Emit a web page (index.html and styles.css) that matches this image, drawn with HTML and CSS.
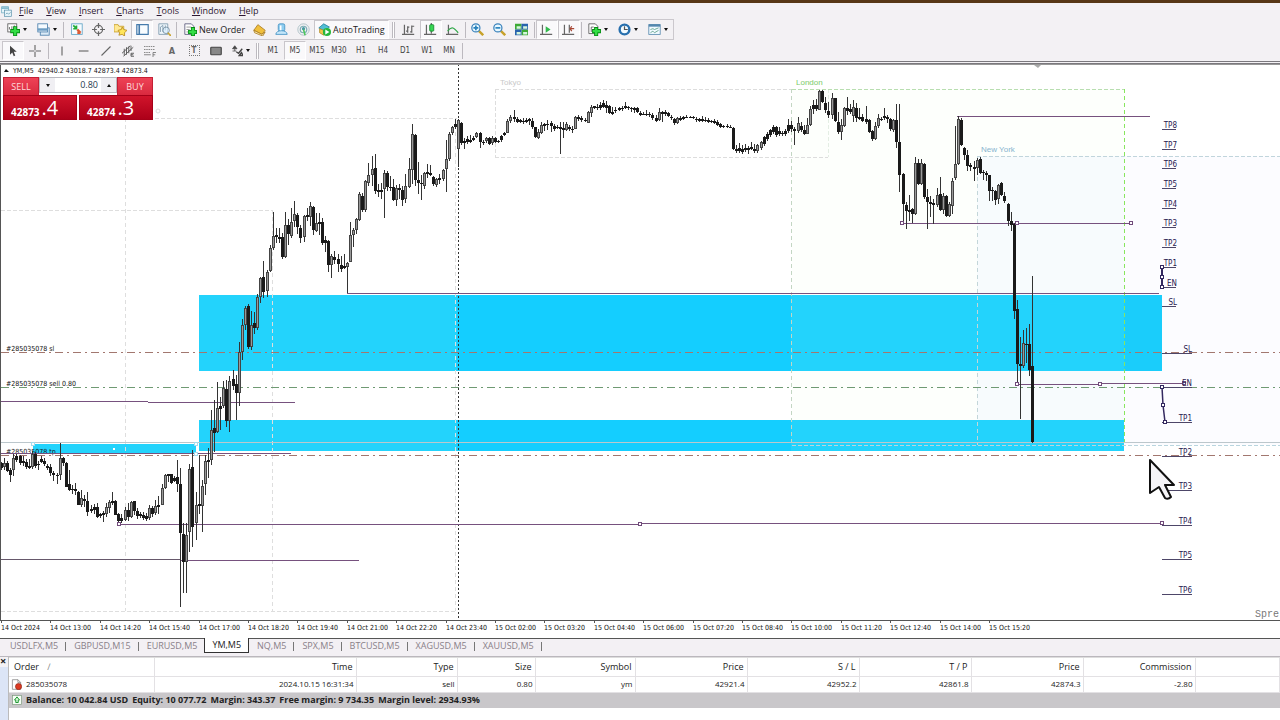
FILE: index.html
```html
<!DOCTYPE html>
<html lang="en">
<head>
<meta charset="utf-8">
<title>YM,M5</title>
<link rel="stylesheet" href="styles.css">
</head>
<body>
<div class="app">
<header class="top">
  <nav class="menu">
    <svg class="icon" viewBox="0 0 16 16"><rect x="1" y="1" width="10" height="9" fill="#e8f5fa" stroke="#67a6bd"/><path d="M1 3h10" stroke="#67a6bd" stroke-width="2"/><rect x="5" y="6" width="10" height="9" fill="#e8f5fa" stroke="#568fa9"/><path d="M7 12l2-2 2 2 3-3" fill="none" stroke="#568fa9"/></svg>
    <button type="button"><u>F</u>ile</button><button type="button"><u>V</u>iew</button><button type="button"><u>I</u>nsert</button><button type="button"><u>C</u>harts</button><button type="button"><u>T</u>ools</button><button type="button"><u>W</u>indow</button><button type="button"><u>H</u>elp</button>
  </nav>
  <div class="bar main-bar">
    <button type="button" class="tool drop" aria-label="New chart"><svg class="icon" viewBox="0 0 16 16"><rect x="1" y="1" width="11" height="10" fill="#fff" stroke="#555"/><path d="M3 8V5M6 9V4M9 7V3" stroke="#555"/><path d="M10 4v12M4 10h12" stroke="#078b15" stroke-width="5"/><path d="M10 5v10M5 10h10" stroke="#33dd45" stroke-width="3"/></svg></button>
    <button type="button" class="tool drop" aria-label="Profiles"><svg class="icon" viewBox="0 0 16 16"><rect x="4" y="6" width="11" height="9" fill="#dcebf7" stroke="#467ba9"/><rect x="1" y="1" width="12" height="10" fill="#f4faff" stroke="#467ba9"/><path d="M1 8h12" stroke="#6c9cc4" stroke-width="3"/></svg></button>
    <i class="sep"></i>
    <button type="button" class="tool" aria-label="Market Watch"><svg class="icon" viewBox="0 0 16 16"><rect x="2" y="1" width="13" height="13" fill="#f5fcff" stroke="#5ca1c5"/><path d="M4 3l4 4M4 7h4V3" stroke="#23ac34" stroke-width="2" fill="none"/><path d="M9 8l4 4M9 12h4" stroke="#dd5b35" stroke-width="3"/></svg></button>
    <button type="button" class="tool" aria-label="Data Window"><svg class="icon" viewBox="0 0 16 16"><circle cx="8" cy="8" r="5" fill="none" stroke="#666" stroke-width="1.5"/><path d="M8 0v6M8 10v6M0 8h6M10 8h6" stroke="#666" stroke-width="1.5"/></svg></button>
    <button type="button" class="tool" aria-label="Navigator"><svg class="icon" viewBox="0 0 16 16"><path d="M0 2h5l1 2h6v7H0z" fill="#ffe993" stroke="#c69c26"/><path d="M10 5l2 3 4 1-3 3 0 4-3-2-4 1 1-3-2-3 4-1z" fill="#ffe65b" stroke="#b6871c"/></svg></button>
    <button type="button" class="tool on" aria-label="Terminal"><svg class="icon" viewBox="0 0 16 16"><rect x="1" y="2" width="14" height="12" fill="#f8fcff" stroke="#447aac" stroke-width="1.5"/><path d="M4 2v12" stroke="#447aac" stroke-width="2"/></svg></button>
    <button type="button" class="tool" aria-label="Strategy Tester"><svg class="icon" viewBox="0 0 16 16"><path d="M1 1h11v13H1zM3 11V5l3-2v8M9 3v6" fill="#eef6fb" stroke="#7895aa"/><circle cx="10" cy="9" r="4" fill="#d7eeff99" stroke="#718a9d"/><path d="M12 12l4 4" stroke="#c8a432" stroke-width="2"/></svg></button>
    <i class="sep"></i>
    <button type="button" class="tool wide order"><svg class="icon" viewBox="0 0 16 16"><path d="M1 1h8l3 3v10H1z" fill="#fff" stroke="#557"/><path d="M3 5h6M3 8h4M3 11h3" stroke="#888"/><path d="M11 5v11M5 11h11" stroke="#078b15" stroke-width="5"/><path d="M11 6v9M6 11h9" stroke="#33dd45" stroke-width="3"/></svg>New Order</button>
    <button type="button" class="tool" aria-label="MetaEditor"><svg class="icon" viewBox="0 0 16 16"><path d="M6 2l9 7-4 5-10-5z" fill="#f0bf3c" stroke="#a7791e"/><path d="M1 9l1 3 10 4 3-5-4 3z" fill="#fff0b4" stroke="#a7791e"/></svg></button>
    <button type="button" class="tool" aria-label="MQL5 Community"><svg class="icon" viewBox="0 0 16 16"><rect x="4" y="1" width="8" height="9" rx="2" fill="#8fcdf0" stroke="#3f8fc0"/><path d="M1 14c0-6 14-6 14 0z" fill="#c3e6fa" stroke="#3f8fc0"/><path d="M7 3v6" stroke="#fff" stroke-width="2"/></svg></button>
    <button type="button" class="tool" aria-label="Signals"><svg class="icon" viewBox="0 0 16 16"><circle cx="8" cy="8" r="7" fill="none" stroke="#a3bac0"/><circle cx="8" cy="8" r="4" fill="none" stroke="#7caeb6" stroke-width="1.5"/><circle cx="8" cy="7" r="2" fill="#4b98a5"/><path d="M8 8l2 7" stroke="#4cc55c" stroke-width="2"/></svg></button>
    <button type="button" class="tool wide on"><svg class="icon" viewBox="0 0 16 16"><path d="M1 6l6-5 7 4-6 5z" fill="#51bed4" stroke="#237f9b"/><path d="M2 7v5l5 3V9z" fill="#efc74d" stroke="#b38d2b"/><circle cx="11" cy="11" r="5" fill="#27b73c"/><path d="M9 8l5 3-5 3z" fill="#fff"/></svg>AutoTrading</button>
    <i class="sep grip"></i>
    <button type="button" class="tool" aria-label="Bar Chart"><svg class="icon" viewBox="0 0 16 16"><path d="M3 2v12M0 14h15M7 4v8M7 10h-2M7 5h2M12 3v9M12 4h3M12 11h-2" fill="none" stroke="#666" stroke-width="1.5"/></svg></button>
    <button type="button" class="tool on" aria-label="Candlesticks"><svg class="icon" viewBox="0 0 16 16"><path d="M3 2v12M0 14h15M9 0v13" stroke="#666" stroke-width="1.5"/><rect x="7" y="2" width="5" height="8" rx="1" fill="#38d654" stroke="#12852b"/></svg></button>
    <button type="button" class="tool" aria-label="Line Chart"><svg class="icon" viewBox="0 0 16 16"><path d="M3 2v12M0 14h15" stroke="#666" stroke-width="1.5"/><path d="M2 10c5-7 8-4 13 2" fill="none" stroke="#30a848" stroke-width="1.5"/></svg></button>
    <i class="sep"></i>
    <button type="button" class="tool" aria-label="Zoom In"><svg class="icon" viewBox="0 0 16 16"><path d="M9 9l6 6" stroke="#c7a12a" stroke-width="3"/><circle cx="6" cy="6" r="5" fill="#e8f8ff" stroke="#3b82bb" stroke-width="1.5"/><path d="M3 6h6M6 3v6" stroke="#2580bc" stroke-width="2"/></svg></button>
    <button type="button" class="tool" aria-label="Zoom Out"><svg class="icon" viewBox="0 0 16 16"><path d="M9 9l6 6" stroke="#c7a12a" stroke-width="3"/><circle cx="6" cy="6" r="5" fill="#e8f8ff" stroke="#3b82bb" stroke-width="1.5"/><path d="M3 6h6" stroke="#2580bc" stroke-width="2"/></svg></button>
    <button type="button" class="tool" aria-label="Tile Windows"><svg class="icon" viewBox="0 0 16 16"><path d="M0 1h8v7H0zM8 8h8v7H8z" fill="#3daa35"/><path d="M8 1h8v7H8zM0 8h8v7H0z" fill="#2763ad"/><path d="M2 4h5v3H2zM10 4h5v3h-5zM2 11h5v3H2zM10 11h5v3h-5z" fill="#d5f6dd"/></svg></button>
    <i class="sep"></i>
    <button type="button" class="tool on" aria-label="Auto Scroll"><svg class="icon" viewBox="0 0 16 16"><path d="M3 2v12M0 14h15" stroke="#666" stroke-width="1.5"/><path d="M7 4l6 4-6 4z" fill="#32ba4d"/></svg></button>
    <button type="button" class="tool on" aria-label="Chart Shift"><svg class="icon" viewBox="0 0 16 16"><path d="M3 2v12M0 14h15M9 2v10" stroke="#666" stroke-width="1.5"/><path d="M15 7h-4M12 4l-2 3 2 3" fill="none" stroke="#a84835" stroke-width="1.5"/></svg></button>
    <i class="sep"></i>
    <button type="button" class="tool drop" aria-label="Indicators"><svg class="icon" viewBox="0 0 16 16"><path d="M1 1h8l3 3v9H1zM4 11V5h3" fill="#fff" stroke="#555"/><path d="M10 5v11M5 10h11" stroke="#078b15" stroke-width="5"/><path d="M10 6v9M6 10h9" stroke="#33dd45" stroke-width="3"/></svg></button>
    <button type="button" class="tool drop" aria-label="Periods"><svg class="icon" viewBox="0 0 16 16"><circle cx="8" cy="8" r="6" fill="#f1faff" stroke="#276fae" stroke-width="3"/><path d="M8 4v4h4" fill="none" stroke="#555" stroke-width="1.5"/></svg></button>
    <button type="button" class="tool drop" aria-label="Templates"><svg class="icon" viewBox="0 0 16 16"><rect x="1" y="2" width="14" height="12" fill="#f0f9ff" stroke="#5487ad"/><path d="M1 3h14" stroke="#5487ad" stroke-width="3"/><path d="M3 8l3-1 2 1 5-2M3 12l3-2 2 2 5-3" fill="none" stroke="#559b82"/></svg></button>
  </div>
  <div class="bar draw-bar">
    <button type="button" class="tool on" aria-label="Cursor"><svg class="icon" viewBox="0 0 16 16"><path d="M4 1v12l3-3 2 5 2-1-2-5h4z" fill="#444"/></svg></button>
    <button type="button" class="tool" aria-label="Crosshair"><svg class="icon" viewBox="0 0 16 16"><path d="M8 0v7M8 9v7M0 8h7M9 8h7" stroke="#666" stroke-width="1.5"/></svg></button>
    <i class="sep"></i>
    <button type="button" class="tool" aria-label="Vertical Line"><svg class="icon" viewBox="0 0 16 16"><path d="M8 2v12" stroke="#666" stroke-width="1.5"/></svg></button>
    <button type="button" class="tool" aria-label="Horizontal Line"><svg class="icon" viewBox="0 0 16 16"><path d="M1 8h13" stroke="#666" stroke-width="1.5"/></svg></button>
    <button type="button" class="tool" aria-label="Trendline"><svg class="icon" viewBox="0 0 16 16"><path d="M2 14L14 2" stroke="#666" stroke-width="1.5"/></svg></button>
    <button type="button" class="tool" aria-label="Equidistant Channel"><svg class="icon" viewBox="0 0 16 16"><path d="M0 11L11 1M2 15L15 3M3 5v9M6 3v10M9 2v9M12 1v7M12 11h4M12 13h3M12 15h4M12 11v4" stroke="#555" stroke-width="1.2"/></svg></button>
    <button type="button" class="tool" aria-label="Fibonacci Retracement"><svg class="icon" viewBox="0 0 16 16"><path d="M0 2h15M0 6h15M0 10h9" stroke="#666" stroke-dasharray="2 1"/><path d="M0 13h9M12 16v-6h4M12 13h3" stroke="#666" fill="none"/></svg></button>
    <button type="button" class="tool glyph" aria-label="Text">A</button>
    <button type="button" class="tool glyph" aria-label="Text Label"><span class="dotted">T</span></button>
    <button type="button" class="tool" aria-label="Shapes"><svg class="icon" viewBox="0 0 16 16"><rect x="1" y="3" width="14" height="10" rx="1" fill="#888" stroke="#444" stroke-width="1.5"/></svg></button>
    <button type="button" class="tool drop" aria-label="Arrows"><svg class="icon" viewBox="0 0 16 16"><path d="M5 1l3 4H2zM5 5v3M2 8h5" fill="#444" stroke="#444"/><path d="M7 9l3 2 5-6M11 14l3-4 2 4z" fill="none" stroke="#444" stroke-width="1.8"/></svg></button>
    <i class="sep grip"></i>
    <button type="button" class="tool">M1</button><button type="button" class="tool on">M5</button><button type="button" class="tool">M15</button><button type="button" class="tool">M30</button><button type="button" class="tool">H1</button><button type="button" class="tool">H4</button><button type="button" class="tool">D1</button><button type="button" class="tool">W1</button><button type="button" class="tool">MN</button>
    <i class="sep"></i>
  </div>
</header>

<main class="chart">
  <svg class="plot" id="plot" viewBox="0 64 1280 574" role="img" aria-label="YM five minute candlestick chart"></svg>
  <form class="trade">
    <button type="button" class="side sell">SELL</button>
    <div class="volume">
      <button type="button" class="step" aria-label="Decrease volume"><i class="tri down"></i></button>
      <input type="text" value="0.80" aria-label="Volume">
      <button type="button" class="step" aria-label="Increase volume"><i class="tri"></i></button>
    </div>
    <button type="button" class="side buy">BUY</button>
    <output class="price">42873<b>.4</b></output>
    <output class="price">42874<b>.3</b></output>
  </form>
</main>

<nav class="tabs">
  <button type="button">USDLFX,M5</button><button type="button">GBPUSD,M15</button><button type="button" class="before">EURUSD,M5</button><button type="button" class="active">YM,M5</button><button type="button">NQ,M5</button><button type="button">SPX,M5</button><button type="button">BTCUSD,M5</button><button type="button">XAGUSD,M5</button><button type="button">XAUUSD,M5</button>
</nav>

<section class="terminal">
  <div class="rail"><button type="button" aria-label="Close terminal">×</button></div>
  <div class="orders">
    <table>
      <colgroup><col class="c-order"><col class="c-time"><col class="c-type"><col class="c-size"><col class="c-symbol"><col class="c-num"><col class="c-num"><col class="c-num"><col class="c-num"><col class="c-num"><col></colgroup>
      <thead><tr><th>Order <span class="sort">∕</span></th><th>Time</th><th>Type</th><th>Size</th><th>Symbol</th><th>Price</th><th>S / L</th><th>T / P</th><th>Price</th><th>Commission</th><th></th></tr></thead>
      <tbody><tr><td><svg class="icon" viewBox="0 0 16 16"><path d="M2 1h8l4 4v10H2z" fill="#fff" stroke="#777"/><path d="M10 1v4h4" fill="none" stroke="#777"/><circle cx="11" cy="11" r="4.500" fill="#dc3a22" stroke="#8d2416"/></svg>285035078</td><td>2024.10.15 16:31:34</td><td>sell</td><td>0.80</td><td>ym</td><td>42921.4</td><td>42952.2</td><td>42861.8</td><td>42874.3</td><td>-2.80</td><td></td></tr></tbody>
    </table>
    <div class="balance"><svg class="icon" viewBox="0 0 16 16"><rect x="1" y="1" width="14" height="14" fill="#f5fff5" stroke="#799779"/><path d="M8 3l4 5h-2v4H6V8H4z" fill="#d2f8d3" stroke="#19922b" stroke-width="1.5"/></svg><span>Balance: 10 042.84 USD</span><span>Equity: 10 077.72</span><span>Margin: 343.37</span><span>Free margin: 9 734.35</span><span>Margin level: 2934.93%</span></div>
  </div>
</section>
</div>
<script src="chart.js"></script>
</body>
</html>
```

FILE: styles.css
```css
* { box-sizing: border-box; }
body { margin: 0; background: #fff; color: #222; font-family: "Open Sans", "Noto Sans", sans-serif; font-size: 9px; line-height: 12px; }
button, input { margin: 0; padding: 0; border: 0; background: none; color: inherit; font: inherit; }
.app { display: flex; flex-direction: column; min-height: 100vh; overflow: hidden; }
.icon { width: 13px; height: 13px; flex: none; }

.top { background: #f3f1f4; border-top: 3px solid #573716; border-bottom: 3px double #7b787e; }
.menu { display: flex; align-items: center; height: 16px; gap: 13px; padding-left: 1px; }
.menu .icon { width: 11px; height: 11px; margin-right: -6px; }
.menu button { color: #2c1730; }
.menu u { text-underline-offset: 1px; }
.bar { display: flex; align-items: center; height: 21px; padding-left: 2px; }
.main-bar { width: max-content; border: 1px solid #cbc8cd; border-left: 0; }
.tool { display: flex; align-items: center; justify-content: center; flex: none; width: 22px; height: 19px; }
.draw-bar .tool { font-family: "DejaVu Sans Condensed", "DejaVu Sans", sans-serif; font-size: 8px; color: #444; }
.draw-bar .icon { width: 12px; height: 12px; }
.tool.on { background: #faf9fb; border: 1px solid #c9c6cb; border-right-color: #fff; border-bottom-color: #fff; }
.tool.drop { width: 30px; gap: 3px; }
.draw-bar .tool.drop { width: 26px; }
.tool.drop::after { content: ""; border: 2px solid transparent; border-top: 3px solid #111; border-bottom: 0; }
.tool.wide { width: auto; gap: 2px; padding: 0 3px; }
.tool.order { padding-left: 6px; }
.draw-bar .glyph { font-size: 9px; font-weight: bold; color: #666; }
.dotted { width: 11px; height: 11px; border: 1px dotted #777; font-size: 8px; line-height: 9px; }
.sep { flex: none; width: 1px; height: 16px; margin: 0 1px; background: #bcb9bf; }
.draw-bar .sep { margin: 0 2px; }
.sep.grip { width: 3px; margin: 0 3px; border: 1px solid #bcb9bf; background: #fff; border-width: 0 1px; }

.chart { position: relative; background: #fff; }
.plot { display: block; width: 100%; height: auto; }
.plot text { font-family: "DejaVu Sans Condensed", "DejaVu Sans", sans-serif; font-size: 7px; fill: #111; }
.plot .level { font-size: 8px; fill: #292052; text-anchor: end; }
.plot .zone-name { font-family: "Liberation Sans", sans-serif; font-size: 8px; }
.plot .spread { font-family: "Liberation Mono", monospace; font-size: 10px; fill: #777; }
.plot line, .plot rect, .plot .crisp { shape-rendering: crispEdges; }
.trade { position: absolute; left: 3px; top: 13px; display: grid; grid-template-columns: 36px 39px 39px 36px; grid-template-rows: 18px 25px; }
.side { background: linear-gradient(#ee4256, #d92a3f); color: #ffd9dd; font-size: 9px; border: 1px solid #c41f35; border-bottom: 0; }
.volume { grid-column: span 2; display: flex; height: 16px; border: 1px solid #b9b9c0; background: #fff; }
.volume input { min-width: 0; flex: 1; text-align: right; padding-right: 3px; color: #263a50; }
.step { display: flex; align-items: center; justify-content: center; width: 15px; background: #f0eff3; }
.tri { border: 2px solid transparent; border-bottom: 3px solid #111; border-top: 0; }
.tri.down { border-top: 3px solid #111; border-bottom: 0; }
.price { grid-column: span 2; display: flex; align-items: flex-end; margin-right: 1px; padding: 0 0 1px 7px; background: linear-gradient(#d0142b, #ad0019); border: 1px solid #a60018; color: #fff; font-size: 10px; font-weight: 700; line-height: 12px; }
.price + .price { margin: 0 0 0 1px; }
.price b { font-size: 20px; font-weight: 400; line-height: 20px; margin-left: 2px; }

.tabs { display: flex; align-items: stretch; height: 18px; padding: 0 0 3px 2px; background: #f3f0f4; border-top: 1px solid #555; color: #8a8089; }
.tabs button { position: relative; padding: 0 8px; }
.tabs button::after { content: ""; position: absolute; right: 0; top: 3px; height: 9px; border-right: 1px solid #777; }
.tabs .before { padding-right: 7px; }
.tabs .active { margin-top: -1px; padding: 0 7px; background: #fff; color: #222; border: 1px solid #333; border-top: 0; }
.tabs .active::after, .tabs .before::after { display: none; }

.terminal { display: flex; flex: 1; background: #fff; border-top: 1px solid #bbb7bd; }
.rail { width: 9px; background: linear-gradient(#f3f1f4 10px, #dce5f6 10px); border-right: 1px solid #bbb; }
.rail button { display: block; font-size: 11px; line-height: 8px; font-weight: bold; }
.orders { flex: 1; min-width: 0; border-top: 1px solid #ddd; }
table { width: 100%; table-layout: fixed; border-collapse: collapse; }
.c-order { width: 145px; } .c-time { width: 202px; } .c-type { width: 101px; } .c-size { width: 78px; } .c-symbol { width: 100px; } .c-num { width: 112px; }
th, td { height: 16px; padding: 0 3px; font-weight: 400; text-align: right; white-space: nowrap; border-right: 1px solid #e3e1e4; border-bottom: 1px solid #e3e1e4; }
th { height: 18px; }
td { padding-right: 2px; font-size: 8px; }
th:first-child, td:first-child { text-align: left; padding-left: 5px; }
td:first-child .icon { width: 11px; height: 11px; margin: 0 4px 0 -3px; vertical-align: middle; }
.sort { margin-left: 6px; color: #888; }
.balance { display: flex; align-items: center; gap: 4px; height: 15px; padding-left: 3px; background: #c9c7ca; font-weight: 700; white-space: nowrap; }
.balance .icon { width: 10px; height: 10px; }
```

FILE: chart.js
```js
// One candle per entry: high, body top, body bottom, low. A leading "u" marks a rising bar.
const candles = `
462 463 468 470|u458 463 467 470|461 463 471 472|468 470 475 482|u454 458 470 476|454 456 460 462|455 456 463 465|456 461 463 466|459 462 467 469|459 466 468 469|
u451 454 467 469|452 454 466 468|461 464 465 470|456 459 462 463|458 461 464 466|464 466 468 470|464 467 473 476|471 473 475 481|473 475 476 484|u443 458 475 480|
457 458 463 466|462 463 487 487|470 484 490 491|485 489 490 494|483 489 491 495|491 492 505 505|u490 498 505 507|495 499 501 507|492 501 512 516|505 509 511 513|
504 507 510 514|503 507 517 518|513 514 516 518|511 513 515 522|u503 507 514 517|u500 502 508 513|492 501 503 505|500 501 515 515|513 514 521 522|514 518 521 523|
u507 510 520 521|503 510 517 521|u501 502 517 518|501 501 511 515|508 511 516 519|512 514 516 518|512 515 518 520|513 516 519 521|u505 508 518 520|506 508 514 517|
u500 506 513 515|496 505 507 514|u484 488 505 505|u474 475 488 489|474 474 476 482|474 474 483 484|476 478 481 482|460 477 484 492|468 484 533 607|523 534 562 593|
u523 535 562 593|u464 469 532 552|450 467 527 547|u492 505 523 540|455 504 506 514|u480 486 506 532|u455 461 484 495|448 460 462 478|u410 430 460 465|400 428 433 452|
u382 408 432 433|397 406 409 430|u381 388 406 408|380 389 421 427|u376 381 421 432|370 379 386 390|375 384 393 420|u342 352 393 406|u319 325 352 360|u306 308 325 330|
304 306 347 349|u311 325 347 350|312 323 328 334|u294 297 328 330|u277 278 297 303|261 277 292 298|u270 272 291 297|u245 248 271 272|u212 236 248 250|228 235 237 243|
228 237 239 243|233 237 257 259|u212 225 257 258|219 225 234 245|u208 222 236 238|u201 214 221 227|213 215 227 234|225 228 238 243|u215 216 237 242|208 215 217 221|
u202 206 217 226|206 207 230 235|u213 223 231 232|213 222 224 235|218 222 243 245|236 240 243 252|240 241 265 272|u254 256 265 278|251 257 260 264|254 259 264 272|
256 265 269 272|254 266 268 269|u262 263 267 293|u222 235 262 262|u228 230 235 247|u218 219 230 234|u192 194 220 221|193 196 210 212|u180 181 210 212|u163 175 183 186|
u156 169 175 186|154 168 191 194|184 190 192 197|183 190 192 199|u170 173 189 218|171 173 187 191|176 187 188 191|179 187 200 201|u185 188 200 206|184 188 190 199|
186 190 200 206|u174 186 199 203|u158 169 187 188|u124 134 170 184|134 135 180 186|162 180 183 194|175 183 184 200|u172 173 186 189|164 172 174 178|165 173 175 176|
176 177 184 186|u178 179 185 187|174 178 180 184|u169 170 179 181|u140 159 169 192|u132 134 159 161|u126 127 133 135|119 124 127 129|u119 120 149 167|122 123 143 145|
138 141 143 149|136 139 142 144|135 140 142 143|136 138 140 141|u132 133 137 138|132 133 142 148|140 142 143 145|u137 138 141 143|137 138 144 145|u136 138 143 145|
137 138 142 143|140 141 142 143|135 136 140 142|132 133 135 136|u119 121 133 133|u115 117 121 123|110 117 119 122|117 119 122 123|119 120 122 123|118 121 122 124|
118 120 122 123|118 119 121 125|118 121 127 129|127 127 137 138|u129 132 138 139|u122 125 133 134|123 124 126 131|120 124 125 130|121 123 126 132|124 126 129 131|
125 127 128 129|122 127 129 154|122 128 130 138|u122 124 130 131|125 127 129 131|126 129 130 133|u116 117 129 129|115 117 119 121|116 118 120 122|118 120 121 122|
u111 112 123 123|u105 107 113 117|106 106 108 109|104 107 108 110|102 105 108 110|100 103 107 108|101 105 108 113|105 106 113 114|107 112 114 115|107 110 111 113|
107 108 110 111|106 108 109 111|102 106 108 109|106 107 108 110|107 108 109 112|107 108 110 113|107 108 112 113|111 113 115 116|112 114 115 115|110 114 115 116|
112 114 115 117|113 115 118 120|115 118 121 122|u108 112 120 121|111 112 114 122|110 112 114 116|112 113 116 117|115 117 118 120|118 119 123 125|u117 118 123 124|
116 118 120 121|116 117 119 120|115 117 118 118|116 117 118 118|116 117 118 119|117 119 120 122|118 119 121 122|116 119 121 122|117 120 121 122|118 120 122 123|
120 121 122 123|119 121 123 124|120 122 125 126|123 124 127 128|125 126 127 128|124 126 127 128|125 127 128 128|127 128 149 150|145 149 151 153|143 148 151 153|
145 149 152 154|144 148 150 152|146 148 150 154|142 147 149 150|144 149 151 153|u144 145 151 153|u141 142 148 150|136 137 144 146|132 134 139 141|129 130 135 137|
125 127 132 134|126 127 135 137|127 131 134 136|131 133 134 136|129 131 134 136|119 125 131 133|121 125 129 132|127 129 131 145|u117 123 131 133|122 126 130 132|
125 130 134 135|u118 125 134 134|u106 109 125 126|100 105 109 114|99 105 109 111|u90 91 110 110|90 91 102 103|97 103 110 113|102 111 115 118|u93 98 115 119|
98 98 121 122|112 122 132 134|u119 125 132 140|u107 108 126 127|97 108 111 115|104 109 112 114|u100 107 116 122|103 108 118 122|108 117 119 120|114 117 121 122|
106 119 122 124|119 120 132 133|130 131 139 141|u122 126 139 140|u114 118 126 128|117 119 120 121|108 116 118 120|115 117 119 123|118 119 129 131|u119 120 130 132|
104 120 142 148|104 142 175 192|173 174 204 221|202 205 211 229|195 210 212 221|208 209 214 223|u157 163 214 215|159 163 184 185|u159 163 184 185|163 164 197 199|
189 197 202 229|196 202 204 217|199 203 205 224|u188 195 205 207|177 194 210 211|u193 196 210 214|195 196 216 217|u202 204 216 217|u178 181 206 214|u126 164 178 180|
u116 119 164 165|118 120 145 146|147 148 155 160|150 155 166 171|163 165 167 171|161 167 169 181|u158 160 168 175|157 159 173 174|170 172 173 180|171 173 175 181|
175 175 191 201|187 190 191 201|190 191 200 205|u184 185 199 204|182 183 195 196|192 196 201 203|203 204 221 226|212 221 225 231|223 224 311 319|300 309 364 383|
337 364 366 419|u330 343 366 368|328 344 345 363|324 344 370 376|276 366 442 443`.replace(/\n/g, "").split("|");

const out = [];
const line = (x1, y1, x2, y2, color, dash = "", w = 1) =>
  out.push(`<line x1="${x1}" y1="${y1}" x2="${x2}" y2="${y2}" stroke="${color}" stroke-width="${w}" stroke-dasharray="${dash}"/>`);
const rect = (x, y, w, h, fill, stroke = "none") =>
  out.push(`<rect x="${x}" y="${y}" width="${w}" height="${h}" fill="${fill}" stroke="${stroke}"/>`);
const text = (x, y, s, cls = "", fill = "") =>
  out.push(`<text x="${x}" y="${y}" class="${cls}"${fill ? ` style="fill:${fill}"` : ""}>${s}</text>`);
const knob = (x, y, c = "#714b7b") => rect(x - 1.5, y - 1.5, 3, 3, "#fff", c);

// Session backgrounds
rect(792, 89, 332, 356, "#fdfffc");
rect(977, 156, 147, 289, "#f7fbfd");
rect(1124, 156, 156, 289, "#fcfcff");

// Price zones
const blue = "#23d3fc";
rect(199, 295, 963, 76, blue);
rect(457, 295, 334, 76, "#14ceff");
rect(1124, 295, 38, 76, "#1acdfb");
rect(199, 420, 925, 31, blue);
rect(457, 420, 334, 31, "#14ceff");
rect(33, 444, 163, 10, blue);

// Session outlines
const grey = "#dedede";
line(155, 118.5, 457, 118.5, grey, "4 2");
line(1, 210.5, 272, 210.5, grey, "4 2");
line(125.5, 118, 125.5, 611, grey, "4 3");
line(272.5, 210, 272.5, 611, grey, "4 3");
line(455.5, 118, 455.5, 611, grey, "4 3");
line(1, 611.5, 455, 611.5, grey, "4 2");
line(495, 89.5, 792, 89.5, "#ddd", "4 2");
line(495.5, 89, 495.5, 157, "#ddd", "4 2");
line(495, 157.5, 828, 157.5, "#ddd", "4 2");
line(828.5, 89, 828.5, 157, "#e4eee4", "4 2");
line(791.5, 89, 791.5, 445, "#c3d6c3", "4 3");
line(792, 89.5, 1124, 89.5, "#b8deb0", "4 2");
line(1124.5, 89, 1124.5, 445, "#88e65e", "4 3");
line(977.5, 156, 977.5, 445, "#c3d6d9", "4 3");
line(977, 156.5, 1280, 156.5, "#c1d5dc", "4 2");
line(792, 445.5, 1280, 445.5, "#b9d5df", "4 2");
line(458.5, 64, 458.5, 620, "#333", "2 2");

// Order levels
text(6, 351, "#285035078 sl");
text(6, 386, "#285035078 sell 0.80");
text(6, 454, "#285035078 tp");
line(1, 352.5, 1280, 352.5, "#a2776f", "8 4 2 4");
line(1, 387.5, 1280, 387.5, "#6f9a73", "8 4 2 4");
line(1, 455.5, 1280, 455.5, "#a2776f", "8 4 2 4");
line(1, 442.5, 1280, 442.5, "#bcc7cc");

// Trend lines
const purple = "#76517e";
line(347, 293.5, 1159, 293.5, purple);
line(957, 116.5, 1150, 116.5, purple);
line(902, 223.5, 1131, 223.5, purple);
line(1, 401.5, 148, 401.5, purple);
line(148, 402.5, 295, 402.5, purple);
line(1, 453.5, 291, 453.5, purple);
line(119, 524.5, 640, 524.5, purple);
line(640, 523.5, 1162, 523.5, purple);
line(1, 559.5, 181, 559.5, "#66586b");
line(181, 560.5, 359, 560.5, purple);
line(1017, 384.5, 1100, 384.5, purple);
line(1100, 383.5, 1184, 383.5, purple);

// Candles
candles.forEach((entry, i) => {
  const up = entry[0] === "u";
  const [high, top, bottom, low] = entry.replace("u", "").split(" ").map(Number);
  const x = Math.floor(1.5 + i * 3.0875);
  line(x + 0.5, high, x + 0.5, low, "#333");
  if (up) {
    rect(x - 1, top, 3, Math.max(1, bottom - top), "#444");
    line(x + 0.5, top + 1, x + 0.5, bottom - 1, "#999");
  } else {
    rect(x - 1, top, 3, Math.max(1, bottom - top), "#1a1a1a");
  }
});

// Line handles
[[902, 223], [1017, 223], [1131, 223], [119, 524], [640, 524], [1162, 523], [1017, 384], [1100, 384], [1184, 383]].forEach(([x, y]) => knob(x, y));
[[33, 444], [196, 444], [196, 454]].forEach(([x, y]) => knob(x, y, "#a6dced"));
rect(113, 448, 2, 2, "#fff");

// Session names
text(500, 85, "Tokyo", "zone-name", "#c9c9c9");
text(796, 85, "London", "zone-name", "#7acb6a");
text(981, 152, "New York", "zone-name", "#86b4cf");

// Target ladders
[["TP8", 129], ["TP7", 149], ["TP6", 168], ["TP5", 188], ["TP4", 208], ["TP3", 227], ["TP2", 247], ["TP1", 267], ["EN", 287], ["SL", 306]].forEach(([name, y]) => {
  text(1177, y - 1, name, "level");
  line(1162, y + 0.5, 1176, y + 0.5, "#4d4668");
});
[["SL", 353], ["EN", 387], ["TP1", 422], ["TP2", 456], ["TP3", 490], ["TP4", 525], ["TP5", 559], ["TP6", 594]].forEach(([name, y]) => {
  text(1192, y - 1, name, "level");
  line(1162, y + 0.5, 1192, y + 0.5, "#4d4668");
});
const navy = "#342960";
line(1162, 267, 1162, 287, navy, "", 2);
[267, 277, 287].forEach(y => knob(1162, y, navy));
out.push(`<path d="M1162 387l1 18 2 17" fill="none" stroke="${navy}" stroke-width="1.5"/>`);
[[1162, 387], [1163, 405], [1165, 422]].forEach(([x, y]) => knob(x, y, navy));

// Chart header, spread readout and shift marker
line(0.5, 64, 0.5, 620, "#555");
line(0, 64.5, 1280, 64.5, "#999");
out.push('<path d="M4 72l2-3 3 3z" fill="#111"/><path d="M1034 65h7l-3 3z" fill="#aaa"/>');
text(13, 73, "YM,M5&#160; 42940.2 43018.7 42873.4 42873.4");
text(1255, 617, "Spre", "spread");
out.push('<circle cx="158" cy="111" r="2" fill="none" stroke="#ddd"/>');

// Time axis
line(0, 620.5, 1280, 620.5, "#555");
["14 Oct 2024", "14 Oct 13:00", "14 Oct 14:20", "14 Oct 15:40", "14 Oct 17:00", "14 Oct 18:20", "14 Oct 19:40", "14 Oct 21:00", "14 Oct 22:20", "14 Oct 23:40", "15 Oct 02:00", "15 Oct 03:20", "15 Oct 04:40", "15 Oct 06:00", "15 Oct 07:20", "15 Oct 08:40", "15 Oct 10:00", "15 Oct 11:20", "15 Oct 12:40", "15 Oct 14:00", "15 Oct 15:20"].forEach((label, i) => {
  const x = Math.round(1 + i * 49.4);
  line(x + 0.5, 620, x + 0.5, 623, "#555");
  text(x, 630, label);
});

// Pointer
out.push('<path d="M1150 460v33l9-6 6 11q3 2 6-1l-6-12h9z" fill="#f5f4f7" stroke="#111" stroke-width="2" stroke-linejoin="round"/>');

document.getElementById("plot").innerHTML = out.join("");
```
